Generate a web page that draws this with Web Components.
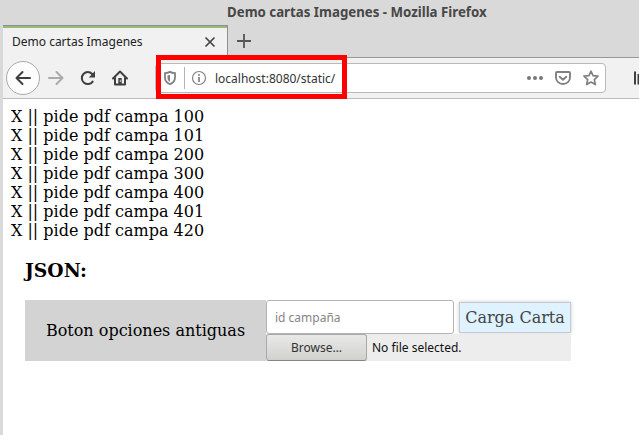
<!DOCTYPE html>
<html lang="es">
<head>
<meta charset="utf-8">
<title>Demo cartas Imagenes</title>
<style>
html, body { margin: 0; height: 100%; overflow: hidden; }
</style>
</head>
<body>
<browser-window></browser-window>
<script>
function define(name, html) {
  customElements.define(name, class extends HTMLElement {
    constructor() {
      super();
      this.attachShadow({ mode: 'open' }).innerHTML = html;
    }
  });
}

define('title-bar', `
<style>
:host { display: block; height: 25px; line-height: 25px; box-sizing: border-box; padding-left: 227px;
  font-weight: bold; font-size: 13.28px; color: #474747; white-space: nowrap; }
</style><slot></slot>`);

define('tab-strip', `
<style>
:host { display: flex; height: 33px; margin-left: 3px; box-sizing: border-box; background: linear-gradient(#989898, #989898) left bottom / 100% 1px no-repeat; }
.tab { display: flex; box-sizing: border-box; width: 225px; background: #f1f1f1; border-top: 1px solid #8f8f8f; border-right: 1px solid #8f8f8f;
  box-shadow: inset 0 2px #9ab87c; padding: 0 11px 1px 9px; align-items: center; justify-content: space-between; color: #222; font-size: 12px; white-space: nowrap; }
svg { display: block; fill: none; }
.plus { margin: 8px 0 0 8px; }
</style>
<div class="tab"><span><slot></slot></span>
<svg width="12" height="12" viewBox="0 0 12 12" stroke="#444" stroke-width="1.7"><path d="M1.5 1.5l9 9M10.500 1.500l-9 9"/></svg></div>
<svg class="plus" width="16" height="16" viewBox="0 0 16 16" stroke="#555" stroke-width="1.8"><path d="M8 1v14M1 8h14"/></svg>`);

define('address-bar', `
<style>
:host { display: flex; align-items: center; box-sizing: border-box; width: 451px; height: 30px; background: #fff;
  border: 1px solid #b9b9b9; border-radius: 4px; padding: 0 6px 0 7px; position: relative; font-size: 12px; color: #333; }
svg { display: block; fill: none; stroke: #808080; flex: none; }
.sep { width: 1px; height: 22px; background: #b4b4b4; margin: 0 6px 0 7px; }
.url { flex: 1; margin-left: 8px; }
.mark { position: absolute; left: 0; top: -9px; width: 191px; height: 44px; box-sizing: border-box; border: 5px solid #f00; }
.icons { display: flex; gap: 12px; }
</style>
<svg width="14" height="16" viewBox="0 0 14 16"><path d="M7 1.900C5.300 2.900 3.500 3.100 2 3.100V7.500C2 11 4 13 7 14.100 10 13 12 11 12 7.500V3.100C10.500 3.100 8.700 2.900 7 1.900z" stroke-width="1.8"/><path d="M7 4.800C6 5.300 5.300 5.400 4.500 5.400V8C4.500 9.900 5.500 11 7 11.800z" fill="#808080" stroke="none"/></svg>
<span class="sep"></span>
<svg width="16" height="16" viewBox="0 0 16 16"><circle cx="8" cy="8" r="6.500" stroke-width="1.200"/><path d="M8 7v5M8 4v1.800" stroke-width="1.700"/></svg>
<span class="url"><slot></slot></span>
<span class="icons">
<svg width="16" height="16" viewBox="0 0 16 16"><g fill="#777" stroke="none"><circle cx="2" cy="8" r="2"/><circle cx="8" cy="8" r="2"/><circle cx="14" cy="8" r="2"/></g></svg>
<svg width="16" height="16" viewBox="0 0 16 16" stroke-width="1.900" stroke-linecap="round" stroke-linejoin="round"><path d="M2 2H14Q15 2 15 3V7.500A7 6.500 0 0 1 1 7.500V3Q1 2 2 2zM4.700 6.700L8 9.800 11.300 6.700"/></svg>
<svg width="16" height="16" viewBox="0 0 16 16" stroke-width="1.700" stroke-linejoin="round"><path d="M8 1.200L10 5.700 15 6.200 11.300 9.600 12.400 14.600 8 12 3.600 14.600 4.700 9.600 1 6.200 6 5.700z"/></svg>
</span>
<span class="mark"></span>`);

define('nav-bar', `
<style>
:host { display: flex; align-items: center; box-sizing: border-box; height: 41px; margin-left: 3px; background: #f1f1f1; border-bottom: 1px solid #bbb; padding-left: 3px; overflow: visible; }
svg { display: block; fill: none; stroke: #3f3f3f; flex: none; }
.back { display: grid; place-items: center; box-sizing: border-box; width: 34px; height: 34px; border: 1px solid #aaa; border-radius: 50%; background: #fdfdfd; }
.group { display: flex; gap: 16px; margin: 0 27px 0 8px; }
.library { margin-left: 28px; width: 5px; height: 16px; }
</style>
<span class="back"><svg width="16" height="16" viewBox="0 0 16 16" stroke-width="2" stroke-linecap="round" stroke-linejoin="round"><path d="M15 8H1.500M7.500 2L1.500 8l6 6"/></svg></span>
<span class="group">
<svg width="16" height="16" viewBox="0 0 16 16" style="stroke:#aaa" stroke-width="2" stroke-linecap="round" stroke-linejoin="round"><path d="M1 8h13.500M8.500 2l6 6-6 6"/></svg>
<svg width="16" height="16" viewBox="0 0 16 16" stroke-width="2"><path d="M12.700 11.600A6 6 0 1 1 12.200 4" stroke-linecap="round"/><path d="M15 1v6.500H8.800z" fill="#3f3f3f" stroke="none"/></svg>
<svg width="16" height="16" viewBox="0 0 16 16" stroke-width="2" stroke-linejoin="round" stroke-linecap="round"><path d="M1 8.500L8 1.500l7 7M3 8v6.500H13V8"/><path d="M6.300 14V8h3.400v6z" fill="#3f3f3f" stroke="none"/><path d="M8.300 10.200v1.500" stroke="#eee" stroke-width=".8"/></svg>
</span>
<address-bar><slot></slot></address-bar>
<svg class="library" viewBox="0 0 5 16" stroke-width="2"><path d="M1 1.500v13M4.500 4v10.500"/></svg>`);

define('campaign-list', `
<style>
:host { display: block; line-height: 19px; }
::slotted(div) { height: 19px; }
</style><slot></slot>`);

define('file-picker', `
<style>
:host { display: flex; align-items: center; height: 27px; font: 12px "Noto Sans", sans-serif; color: #111; }
.btn { box-sizing: border-box; width: 101px; height: 27px; line-height: 25px; text-align: center; border: 1px solid #aaa; border-bottom-color: #858585; border-radius: 3px;
  background: linear-gradient(#e9e9e8, #d1d1cf); color: #333; margin-right: 5px; }
</style><span class="btn">Browse…</span><span>No file selected.</span>`);

define('option-panel', `
<style>
:host { display: grid; grid-template-columns: 241px 305px; width: 546px; height: 61px; }
.label { display: grid; place-items: center; background: #d3d3d3; }
.top { display: flex; height: 34px; gap: 5px; align-items: center; }
.field { box-sizing: border-box; width: 188px; height: 34px; line-height: 33px; padding-left: 8px; border: 1px solid #b4b4b4; border-radius: 3px; background: #fff; font-size: 12px; font-family: "Noto Sans", sans-serif; color: #858585; }
.go { box-sizing: border-box; width: 112px; height: 31px; line-height: 29px; text-align: center; border: 1px solid #c8c8ce; background: #def2ff; color: #444; box-shadow: 0 0 4px #ccc; white-space: nowrap; }
file-picker { background: #ededed; position: relative; }
</style>
<div class="label"><slot></slot></div>
<div><div class="top"><div class="field">id campaña</div><div class="go">Carga Carta</div></div><file-picker></file-picker></div>`);

define('page-view', `
<style>
:host { display: block; box-sizing: border-box; margin-left: 3px; flex: 1; background: #fff; padding: 8px; color: #000; font: 16px/19px "DejaVu Serif", serif; }
h3 { margin: 19px 0 19px 14px; font-size: 18.720px; line-height: 22px; }
option-panel { margin-left: 14px; }
</style>
<campaign-list><slot></slot></campaign-list>
<h3>JSON:</h3>
<option-panel>Boton opciones antiguas</option-panel>`);

define('browser-window', `
<style>
:host { display: flex; flex-direction: column; width: 639px; height: 435px; background: #d9d9d9; font-family: "Noto Sans", sans-serif; overflow: hidden; }
nav-bar { position: relative; z-index: 1; }
</style>
<title-bar>Demo cartas Imagenes - Mozilla Firefox</title-bar>
<tab-strip>Demo cartas Imagenes</tab-strip>
<nav-bar>localhost:8080/static/</nav-bar>
<page-view>${[100, 101, 200, 300, 400, 401, 420].map(n => `<div>X || pide pdf campa ${n}</div>`).join('')}</page-view>`);
</script>
</body>
</html>
